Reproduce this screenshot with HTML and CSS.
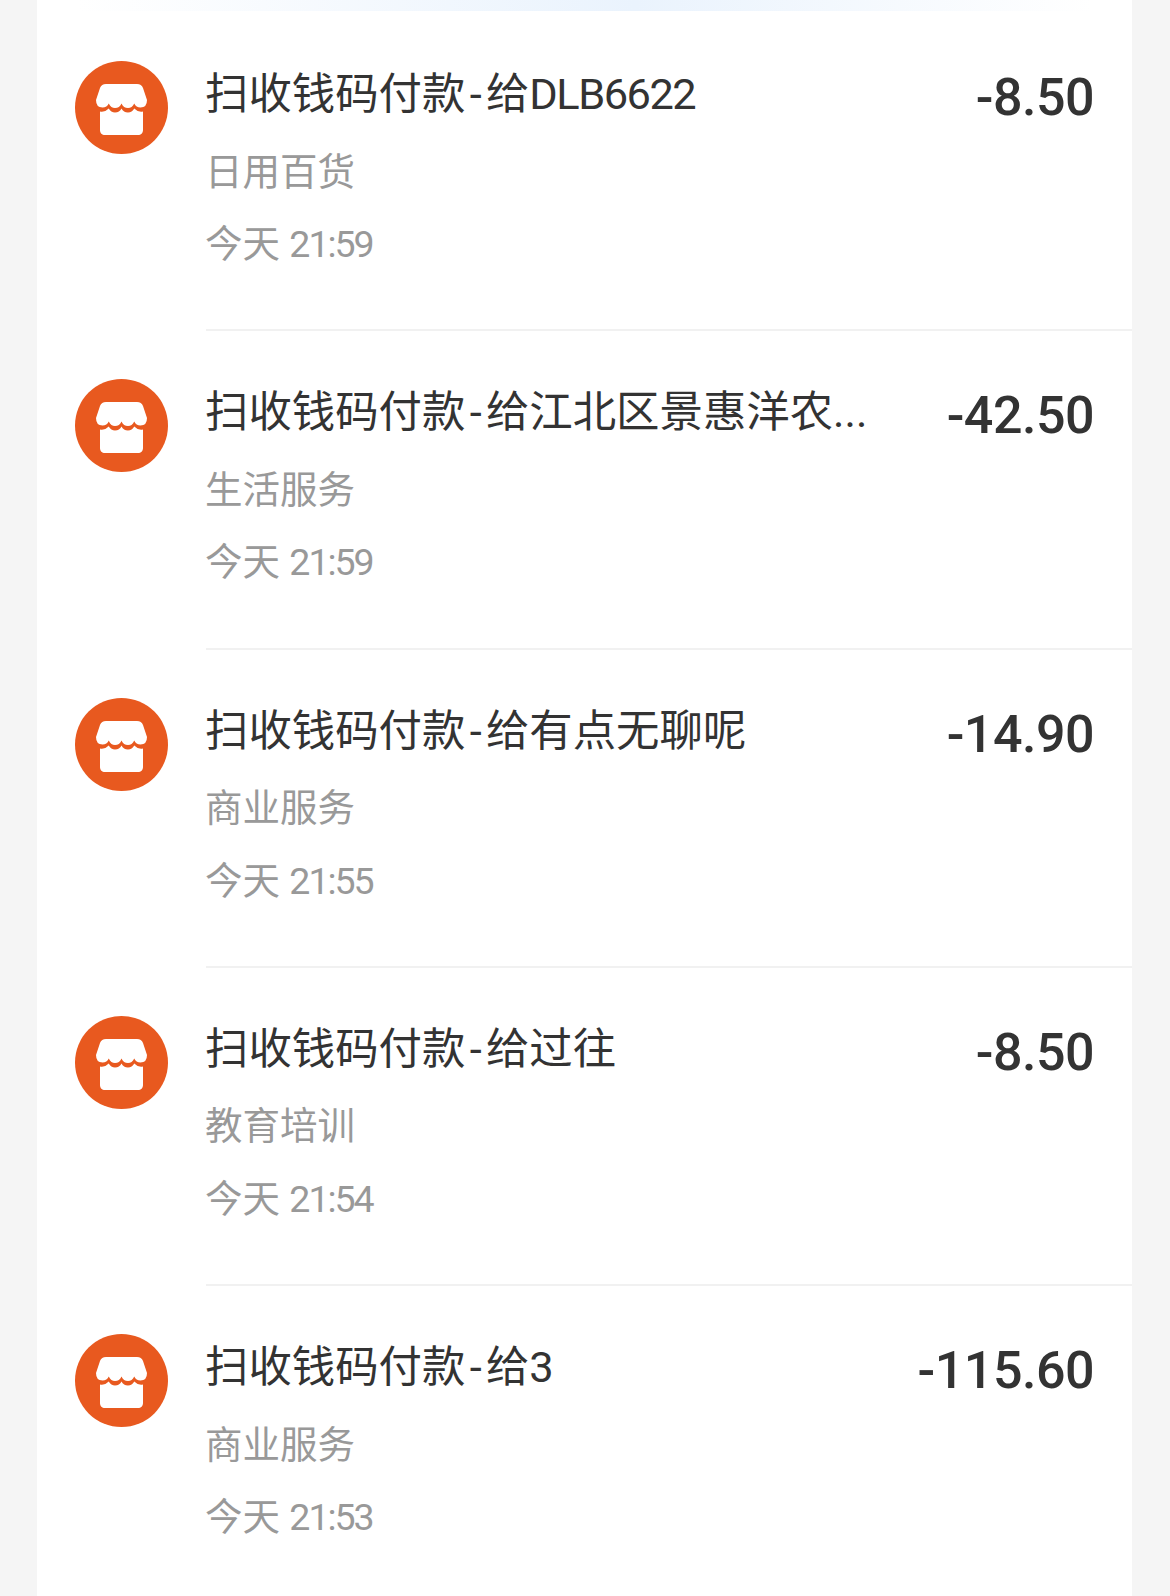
FILE: index.html
```html
<!DOCTYPE html>
<html lang="zh-CN">
<head>
  <meta charset="UTF-8">
  <title>账单</title>
  <link rel="stylesheet" href="styles.css">
</head>
<body>
  <svg class="defs" width="0" height="0">
    <symbol id="shop" viewBox="0 0 93 93">
      <circle cx="46.5" cy="46.5" r="46.5" fill="#e8591f"/>
      <path fill="#fff" d="M31 23H62C65 23 67 24.500 68 27L72 39Q72 46.500 65.500 46.500Q61 46.500 59.250 42.500Q57 47 53 47Q48.500 47 46.500 42.500Q44.500 47 40 47Q36 47 33.750 42.500Q32 46.500 27.500 46.500Q21 46.500 21 39L25 27C26 24.500 28 23 31 23Z"/>
      <path fill="#fff" d="M25 50.500Q30 51.500 33.750 47.500Q36 51.500 40 51.500Q44.500 51.500 46.500 47.500Q48.500 51.500 53 51.500Q57 51.500 59.250 47.500Q63 51.500 68 50.500V69C68 72 66 74 63 74H30C27 74 25 72 25 69Z"/>
    </symbol>
  </svg>

  <div class="card">
    <div class="glow"></div>

    <div class="row">
      <svg class="icon"><use href="#shop"/></svg>
      <div class="info">
        <div class="top">
          <div class="title">扫收钱码付款<span class="dash">-</span>给<span class="latin">DLB6622</span></div>
          <div class="amount">-8.50</div>
        </div>
        <div class="sub">日用百货</div>
        <div class="time">今天 <span class="clock">21:59</span></div>
      </div>
    </div>

    <div class="row">
      <svg class="icon"><use href="#shop"/></svg>
      <div class="info">
        <div class="top">
          <div class="title">扫收钱码付款<span class="dash">-</span>给江北区景惠洋农...</div>
          <div class="amount">-42.50</div>
        </div>
        <div class="sub">生活服务</div>
        <div class="time">今天 <span class="clock">21:59</span></div>
      </div>
    </div>

    <div class="row">
      <svg class="icon"><use href="#shop"/></svg>
      <div class="info">
        <div class="top">
          <div class="title">扫收钱码付款<span class="dash">-</span>给有点无聊呢</div>
          <div class="amount">-14.90</div>
        </div>
        <div class="sub">商业服务</div>
        <div class="time">今天 <span class="clock">21:55</span></div>
      </div>
    </div>

    <div class="row">
      <svg class="icon"><use href="#shop"/></svg>
      <div class="info">
        <div class="top">
          <div class="title">扫收钱码付款<span class="dash">-</span>给过往</div>
          <div class="amount">-8.50</div>
        </div>
        <div class="sub">教育培训</div>
        <div class="time">今天 <span class="clock">21:54</span></div>
      </div>
    </div>

    <div class="row">
      <svg class="icon"><use href="#shop"/></svg>
      <div class="info">
        <div class="top">
          <div class="title">扫收钱码付款<span class="dash">-</span>给<span class="latin">3</span></div>
          <div class="amount">-115.60</div>
        </div>
        <div class="sub">商业服务</div>
        <div class="time">今天 <span class="clock">21:53</span></div>
      </div>
    </div>
  </div>
</body>
</html>
```

FILE: styles.css
```css
html, body {
  margin: 0;
  height: 1596px;
  overflow: hidden;
}
body {
  background: #f5f5f5;
  font-family: "Roboto", "Noto Sans CJK SC", sans-serif;
  color: #333;
}
.defs {
  display: block;
}
.card {
  background: #fff;
  margin: 0 38px 0 37px;
  height: 1596px;
  display: flex;
  flex-direction: column;
}
.glow {
  height: 11px;
  margin: 0 40px 2px;
  background: linear-gradient(90deg, #fff, #eaf3fd 55%, #fff);
  flex: none;
}
.row {
  display: flex;
  height: 318.3px;
  box-sizing: border-box;
  flex: none;
  padding-left: 38px;
}
.icon {
  width: 93px;
  height: 93px;
  margin-top: 48px;
  flex: none;
}
.info {
  margin-left: 38px;
  flex: 1;
  min-width: 0;
  padding: 47px 38px 0 0;
  border-bottom: 2px solid #f1f1f1;
  box-sizing: border-box;
}
.row:last-child .info {
  border-bottom: none;
}
.top {
  display: flex;
  justify-content: space-between;
  align-items: center;
  height: 70px;
  margin-left: -1px;
}
.title {
  font-size: 43.4px;
  line-height: 70px;
  white-space: nowrap;
}
.dash {
  margin: 0 4.3px;
}
.latin {
  letter-spacing: -1.5px;
}
.amount {
  font-size: 52px;
  font-weight: 500;
  line-height: 70px;
  margin-top: 6px;
  letter-spacing: -0.5px;
}
.sub {
  font-size: 37.5px;
  line-height: 50px;
  color: #999;
  margin: 16.5px 0 0 -1px;
}
.time {
  font-size: 37.5px;
  line-height: 50px;
  color: #999;
  margin: 22.5px 0 0 -1px;
}
.clock {
  letter-spacing: -2px;
}
```
